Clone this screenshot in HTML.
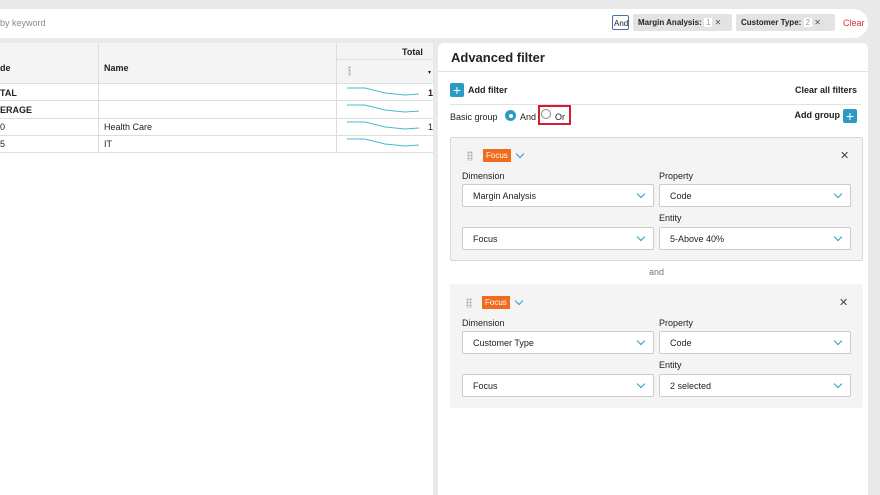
<!DOCTYPE html><html><head><style>
body{margin:0;width:880px;height:495px;background:#e9e9e9;font-family:"Liberation Sans",sans-serif;font-size:9px;color:#222;position:relative;overflow:hidden}
.a{position:absolute}
.b{font-weight:bold}
.sel{position:absolute;height:23px;background:#fff;border:1px solid #ccc;border-radius:2px;box-sizing:border-box;padding:6px 10px;font-size:9px}
.chev{position:absolute;right:9px;top:6px;width:5px;height:5px;border-right:1.5px solid #2a9cc4;border-bottom:1.5px solid #2a9cc4;transform:rotate(45deg)}
.plus{position:absolute;width:14px;height:14px;background:#2a9cc4;border-radius:2px;color:#fff;font-size:14px;line-height:14px;text-align:center}
.row{position:absolute;left:0;width:433px;height:1px;background:#ddd}
.dots{position:absolute;width:6px;height:10px;background-image:radial-gradient(circle,#aaa 1px,transparent 1.2px);background-size:3px 3px}
</style></head><body>
<div class="a" style="left:0;top:9px;width:868px;height:29px;background:#fff;border-radius:0 15px 15px 0"></div>
<div class="a" style="left:0;top:18px;color:#888">by keyword</div>
<div class="a" style="left:612px;top:15px;width:17px;height:15px;border:1px solid #4a6fb0;border-radius:2px;box-sizing:border-box;font-size:8px;padding:3px 0 0 1px">And</div>
<div class="a b" style="left:633px;top:14px;width:99px;height:17px;background:#e3e3e3;border-radius:2px;font-size:8px;padding:4px 5px;box-sizing:border-box">Margin Analysis: <span style="background:#fff;color:#999;font-weight:normal;padding:0 2px">1</span> <span style="font-weight:normal;color:#555">✕</span></div>
<div class="a b" style="left:736px;top:14px;width:99px;height:17px;background:#e3e3e3;border-radius:2px;font-size:8px;padding:4px 5px;box-sizing:border-box">Customer Type: <span style="background:#fff;color:#999;font-weight:normal;padding:0 2px">2</span> <span style="font-weight:normal;color:#555">✕</span></div>
<div class="a" style="left:843px;top:18px;color:#d33">Clear</div>

<div class="a" style="left:0;top:43px;width:433px;height:452px;background:#fff;border-radius:0 6px 0 0">
<div class="a" style="left:0;top:0;width:433px;height:40px;background:#f4f4f4"></div>
<div class="row" style="top:40px"></div>
<div class="row" style="top:57px"></div>
<div class="row" style="top:75px"></div>
<div class="row" style="top:92px"></div>
<div class="row" style="top:109px"></div>
<div class="a" style="left:98px;top:0;width:1px;height:110px;background:#ddd"></div>
<div class="a" style="left:336px;top:0;width:1px;height:110px;background:#ddd"></div>
<div class="a" style="left:337px;top:16px;width:96px;height:1px;background:#ddd"></div>
<div class="a b" style="left:402px;top:4px">Total</div>
<div class="dots" style="left:348px;top:23px;width:3px"></div>
<div class="a b" style="left:0;top:20px">de</div><div class="a b" style="left:104px;top:20px">Name</div>
<div class="a b" style="left:0;top:45px">TAL</div><div class="a b" style="left:0;top:62px">ERAGE</div>
<div class="a" style="left:0;top:79px">0</div><div class="a" style="left:104px;top:79px">Health Care</div>
<div class="a" style="left:0;top:96px">5</div><div class="a" style="left:104px;top:96px">IT</div>
<div class="a b" style="left:428px;top:45px">1</div><div class="a" style="left:428px;top:79px">1</div>
<svg class="a" style="left:345px;top:42px" width="80" height="70"><g fill="none" stroke="#4ab8d0" stroke-width="1"><path d="M2 3 L20 3 L40 8 L60 10 L74 9"/><path d="M2 20 L20 20 L40 25 L60 27 L74 26"/><path d="M2 37 L20 37 L40 42 L60 44 L74 43"/><path d="M2 54 L20 54 L40 59 L60 61 L74 60"/></g></svg>
<div class="a" style="left:428px;top:26px;font-size:6px">▾</div>
</div>

<div class="a" style="left:438px;top:43px;width:430px;height:452px;background:#fff;border-radius:6px 6px 0 0">
<div class="a b" style="left:13px;top:7px;font-size:13px">Advanced filter</div>
<div class="a" style="left:0;top:28px;width:430px;height:1px;background:#e2e2e2"></div>
<div class="plus" style="left:12px;top:40px">+</div>
<div class="a b" style="left:30px;top:42px">Add filter</div>
<div class="a b" style="right:11px;top:42px">Clear all filters</div>
<div class="a" style="left:12px;top:61px;width:411px;height:1px;background:#e2e2e2"></div>
<div class="a" style="left:12px;top:69px">Basic group</div>
<div class="a" style="left:67px;top:67px;width:11px;height:11px;border-radius:50%;background:#2a9cc4"><div class="a" style="left:3.5px;top:3.5px;width:4px;height:4px;border-radius:50%;background:#fff"></div></div>
<div class="a" style="left:82px;top:69px">And</div>
<div class="a" style="left:100px;top:62px;width:33px;height:20px;border:2px solid #d02030;box-sizing:border-box"></div>
<div class="a" style="left:103px;top:66px;width:10px;height:10px;border-radius:50%;border:1px solid #888;box-sizing:border-box"></div>
<div class="a" style="left:117px;top:69px">Or</div>
<div class="a b" style="right:28px;top:67px">Add group</div>
<div class="plus" style="left:405px;top:66px">+</div>

<div class="a" style="left:12px;top:94px;width:413px;height:124px;background:#f4f4f4;border:1px solid #d8d8d8;border-radius:2px;box-sizing:border-box">
<div class="dots" style="left:16px;top:13px"></div>
<div class="a" style="left:32px;top:11px;background:#f26a1b;color:#fff;padding:2px 3px;font-size:8px">Focus</div>
<div class="chev" style="left:66px;right:auto;top:13px"></div>
<div class="a" style="left:389px;top:11px;font-size:11px;color:#444">✕</div>
<div class="a" style="left:11px;top:33px">Dimension</div><div class="a" style="left:208px;top:33px">Property</div>
<div class="sel" style="left:11px;top:46px;width:192px">Margin Analysis<div class="chev"></div></div>
<div class="sel" style="left:208px;top:46px;width:192px">Code<div class="chev"></div></div>
<div class="a" style="left:208px;top:75px">Entity</div>
<div class="sel" style="left:11px;top:89px;width:192px">Focus<div class="chev"></div></div>
<div class="sel" style="left:208px;top:89px;width:192px">5-Above 40%<div class="chev"></div></div>
</div>
<div class="a" style="left:211px;top:224px;color:#777">and</div>

<div class="a" style="left:12px;top:241px;width:413px;height:124px;background:#f4f4f4;border-radius:2px">
<div class="dots" style="left:16px;top:14px"></div>
<div class="a" style="left:32px;top:12px;background:#f26a1b;color:#fff;padding:2px 3px;font-size:8px">Focus</div>
<div class="chev" style="left:66px;right:auto;top:14px"></div>
<div class="a" style="left:389px;top:12px;font-size:11px;color:#444">✕</div>
<div class="a" style="left:12px;top:34px">Dimension</div><div class="a" style="left:209px;top:34px">Property</div>
<div class="sel" style="left:12px;top:47px;width:192px">Customer Type<div class="chev"></div></div>
<div class="sel" style="left:209px;top:47px;width:192px">Code<div class="chev"></div></div>
<div class="a" style="left:209px;top:76px">Entity</div>
<div class="sel" style="left:12px;top:90px;width:192px">Focus<div class="chev"></div></div>
<div class="sel" style="left:209px;top:90px;width:192px">2 selected<div class="chev"></div></div>
</div>
</div>
</body></html>
